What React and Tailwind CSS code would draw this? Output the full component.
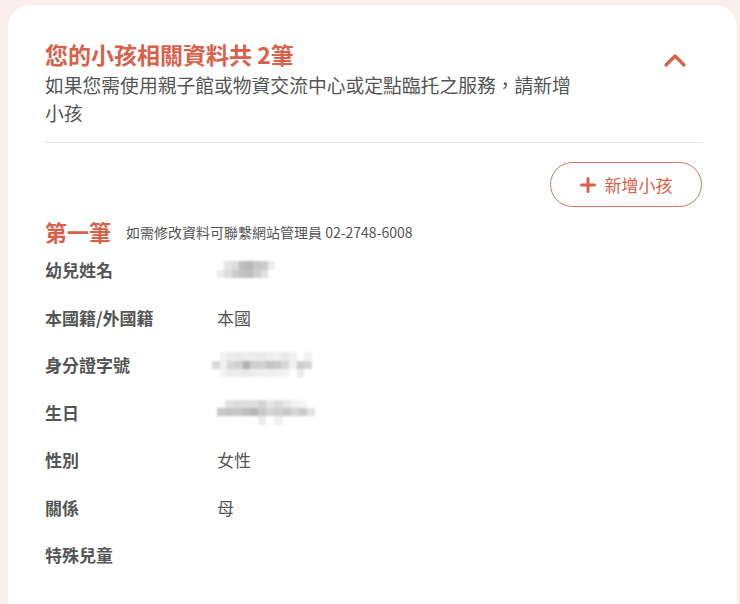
import React from "react";

const FONT = { fontFamily: '"Noto Sans CJK TC", "Noto Sans", sans-serif' };

function Pixelated({ rows, w = 8, h = 8 }) {
  return (
    <div className="flex flex-col blur-[0.8px]">
      {rows.map((row, i) => (
        <div key={i} className="flex">
          {row.map((c, j) => (
            <div key={j} style={{ width: w, height: h, background: c }} />
          ))}
        </div>
      ))}
    </div>
  );
}

const W = "#ffffff";
const nameRows = [
  [W, "#e4e4e4", "#dcdcdc", "#bdbdbd", "#b8b8b8", "#c6c6c6", "#cbcbcb", "#eeeeee"],
  ["#ebebeb", "#dcdcdc", "#cccccc", "#c2c2c2", "#bfbfbf", "#cfcfcf", "#e0e0e0", W],
];
const idRows = [
  [W, "#f0f0f0", "#ececec", "#eaeaea", "#eeeeee", "#ececec", "#eaeaea", "#eeeeee", "#f0f0f0", "#e8e8e8", "#f0f0f0", W, "#f2f2f2", W],
  ["#dadada", "#f0f0f0", "#d6d6d6", "#d0d0d0", "#b0b0b0", "#cfcfcf", "#d2d2d2", "#c4c4c4", "#c8c8c8", "#d8d8d8", "#f0f0f0", "#cccccc", "#d4d4d4", W],
  [W, "#f2f2f2", "#ebebeb", "#ececec", "#e8e8e8", "#eeeeee", "#efefef", "#eeeeee", "#f0f0f0", "#f2f2f2", W, "#e8e8e8", W, W],
];
const birthRows = [
  [W, "#e2e2e2", "#dcdcdc", "#dedede", "#e0e0e0", "#d4d4d4", "#e6e6e6", "#dcdcdc", "#e8e8e8", "#f0f0f0", "#f4f4f4", W],
  ["#c8c8c8", "#c4c4c4", "#c8c8c8", "#c0c0c0", "#b6b6b6", "#cacaca", "#d4d4d4", "#d0d0d0", "#c8c8c8", "#d6d6d6", "#cacaca", "#e2e2e2"],
  [W, W, W, W, W, "#ececec", W, "#f0f0f0", W, W, W, W],
];

function Row({ label, children }) {
  return (
    <div className="flex h-[47.5px] items-center">
      <div className="w-[172px] text-[17px] font-bold text-[#555555]">{label}</div>
      <div className="text-[17px] text-[#555555]">{children}</div>
    </div>
  );
}

export default function App() {
  return (
    <div className="min-h-[604px] w-[740px] overflow-hidden bg-[#fbefee] pt-[5px]" style={FONT}>
      <div className="ml-[8px] h-[620px] w-[729px] rounded-[22px] bg-white pl-[37px] pr-[35px] pt-[32px]">
        <div className="flex items-start justify-between">
          <div>
            <div className="text-[23px] font-bold leading-[34px] text-[#d9604a]">
              您的小孩相關資料共 2筆
            </div>
            <div className="max-w-[540px] text-[18.8px] leading-[28px] text-[#555555]">
              如果您需使用親子館或物資交流中心或定點臨托之服務，請新增小孩
            </div>
          </div>
          <svg width="24" height="16" viewBox="0 0 24 16" className="mr-[15px] mt-[15px]">
            <path d="M3 13 L12 4 L21 13" fill="none" stroke="#d9604a" strokeWidth="3.2" strokeLinecap="round" strokeLinejoin="round" />
          </svg>
        </div>
        <div className="mt-[15px] h-px bg-[#e6e6e6]" />
        <div className="mt-[19px] flex justify-end">
          <button className="flex h-[45px] w-[152px] items-center justify-center gap-[9px] rounded-full border-[1.5px] border-[#c97a6c] text-[17px] text-[#d9604a]">
            <svg width="16" height="16" viewBox="0 0 16 16">
              <path d="M8 1.5 V14.5 M1.5 8 H14.5" stroke="#d9604a" strokeWidth="3" strokeLinecap="round" />
            </svg>
            <span>新增小孩</span>
          </button>
        </div>
        <div className="mt-[9px] flex h-[30px] items-center">
          <span className="text-[22px] font-bold text-[#d9604a]">第一筆</span>
          <span className="ml-[15px] mt-[3px] text-[14px] text-[#555555]">如需修改資料可聯繫網站管理員 02-2748-6008</span>
        </div>
        <Row label="幼兒姓名">
          <Pixelated rows={nameRows} w={7.3} h={8.5} />
        </Row>
        <Row label="本國籍/外國籍">本國</Row>
        <Row label="身分證字號">
          <div className="-ml-[5px]">
            <Pixelated rows={idRows} w={7.7} h={8.4} />
          </div>
        </Row>
        <Row label="生日">
          <Pixelated rows={birthRows} w={8.2} h={8.4} />
        </Row>
        <Row label="性別">女性</Row>
        <Row label="關係">母</Row>
        <Row label="特殊兒童"></Row>
      </div>
    </div>
  );
}
